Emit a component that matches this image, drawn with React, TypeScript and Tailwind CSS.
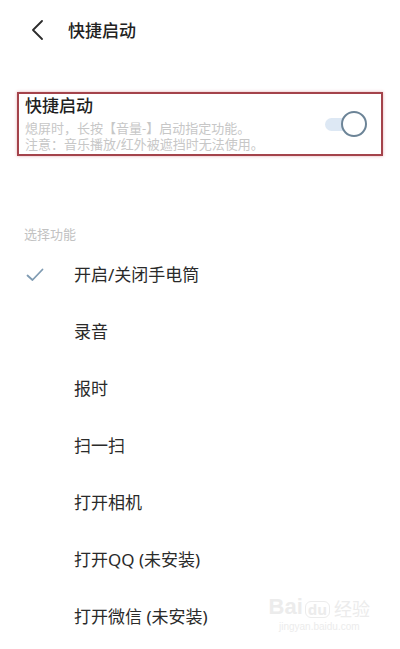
const functions = [
  { label: "开启/关闭手电筒", checked: true },
  { label: "录音" },
  { label: "报时" },
  { label: "扫一扫" },
  { label: "打开相机" },
  { label: "打开QQ (未安装)" },
  { label: "打开微信 (未安装)" },
];

function Toggle() {
  return (
    <div className="relative h-[28px] w-[48px] shrink-0">
      <div className="absolute left-[4px] top-[8px] h-[13px] w-[32px] rounded-full bg-[#dde8f4]" />
      <div className="absolute right-[2px] top-[1px] h-[26px] w-[26px] rounded-full border-2 border-[#6c8497] bg-white" />
    </div>
  );
}

export default function App() {
  return (
    <div
      className="relative h-[649px] w-[400px] overflow-hidden bg-white text-[#222]"
      style={{ fontFamily: '"Noto Sans", "Noto Sans CJK SC", sans-serif' }}
    >
      <header className="flex h-[60px] items-center pl-[31px]">
        <svg width="13" height="20" viewBox="0 0 13 20" fill="none">
          <path d="M11 1 L2 10 L11 19" stroke="#2c2c2c" strokeWidth="1.8" strokeLinecap="round" strokeLinejoin="round" />
        </svg>
        <h1 className="ml-[24px] text-[17px] font-medium leading-none">快捷启动</h1>
      </header>

      <section className="mx-[17px] mt-[32px] flex h-[64px] items-center justify-between border-2 border-[#a4434b] pl-[6px] pr-[12px] shadow-[0_0_3px_rgba(200,80,90,0.45)]">
        <div className="flex flex-col">
          <span className="text-[17px] font-medium leading-[20px] text-[#1f1f1f]">快捷启动</span>
          <span className="mt-[4px] text-[13px] leading-[16px] text-[#c7c7c7]">熄屏时，长按【音量-】启动指定功能。</span>
          <span className="text-[13px] leading-[16px] text-[#c7c7c7]">注意：音乐播放/红外被遮挡时无法使用。</span>
        </div>
        <Toggle />
      </section>

      <p className="ml-[24px] mt-[68px] text-[13px] leading-[20px] text-[#c2c2c2]">选择功能</p>

      <ul className="mt-[2px]">
        {functions.map(({ label, checked }) => (
          <li key={label} className="flex h-[57px] items-center">
            <span className="flex w-[74px] justify-center pr-[4px]">
              {checked ? (
                <svg width="18" height="14" viewBox="0 0 18 14" fill="none">
                  <path d="M1.5 7.5 L6.5 12 L16.5 1.5" stroke="#7f9bb2" strokeWidth="1.8" strokeLinecap="round" strokeLinejoin="round" />
                </svg>
              ) : null}
            </span>
            <span className="text-[17px] leading-none text-[#2a2a2a]">{label}</span>
          </li>
        ))}
      </ul>

      <div className="absolute right-[30px] top-[596px] flex flex-col items-center text-[#ececec]">
        <div className="flex items-end gap-[2px]">
          <span className="text-[22px] font-bold leading-none" style={{ fontFamily: '"Liberation Sans", sans-serif' }}>Bai</span>
          <span className="rounded-[6px] border border-[#ececec] px-[2px] text-[15px] font-bold leading-none">du</span>
          <span className="ml-[2px] text-[18px] leading-none">经验</span>
        </div>
        <span className="mt-[4px] text-[10px] leading-none" style={{ fontFamily: '"Liberation Sans", sans-serif' }}>jingyan.baidu.com</span>
      </div>
    </div>
  );
}
